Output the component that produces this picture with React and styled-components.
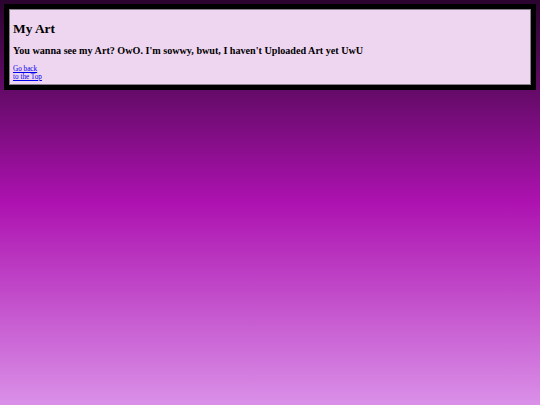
import React from "react";
import styled, { createGlobalStyle } from "styled-components";

const Global = createGlobalStyle`
  html, body {
    margin: 0;
    padding: 0;
  }
  html {
    min-height: 100%;
    background: linear-gradient(to bottom, #2a042e 0%, #ad12b0 50%, #da90e8 100%);
    background-attachment: fixed;
  }
  body {
    min-height: 405px;
    padding: 4px;
    box-sizing: border-box;
    font-family: "Liberation Serif", "Times New Roman", serif;
    font-size: 8.67px;
  }
`;

const Panel = styled.section`
  border: 5px solid #000;
  background: #efd6f0;
  box-shadow: inset 0 0 0 1px #8a7f8c;
  padding: 0 4px 4px 4px;
  margin: 0;
`;

const Title = styled.h2`
  font-size: 13.4px;
  font-weight: bold;
  margin: 12px 0 8px 0;
  color: #000;
`;

const Message = styled.h3`
  font-size: 10.14px;
  font-weight: bold;
  margin: 8px 0 10px 0;
  color: #000;
`;

const Nav = styled.p`
  margin: 0;
  font-size: 7.2px;
  line-height: 7.6px;
`;

const BackLink = styled.a`
  color: #0000ee;
  text-decoration: underline;
`;

export default function App() {
  return (
    <>
      <Global />
      <Panel>
        <Title>My Art</Title>
        <Message>
          You wanna see my Art? OwO. I'm sowwy, bwut, I haven't Uploaded Art yet UwU
        </Message>
        <Nav>
          <BackLink href="#top">
            Go back
            <br />
            to the Top
          </BackLink>
        </Nav>
      </Panel>
    </>
  );
}
